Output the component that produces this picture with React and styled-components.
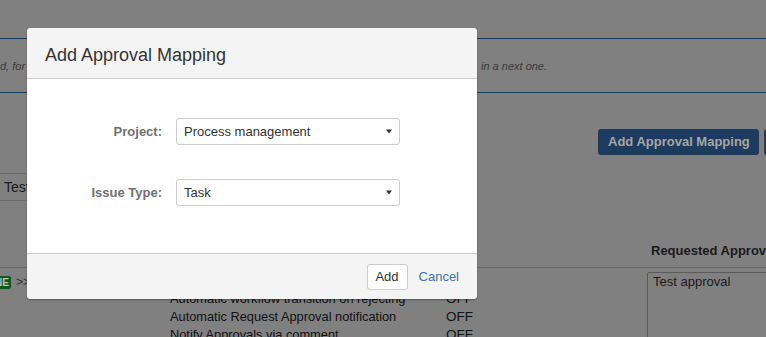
import styled, { createGlobalStyle } from "styled-components"

const GlobalStyle = createGlobalStyle`
  html, body { margin:0; padding:0; }
  body {
    font-family:"Liberation Sans", Arial, sans-serif;
    background:#808080;
    overflow:hidden;
  }
`

const Screen = styled.div`
  position:relative;
  width:766px;
  height:337px;
  overflow:hidden;
  background:#808080;
`

const Page = styled.div`
  padding-top:38px;
  color:#1a1a1a;
  font-size:13px;
`

const Rule = styled.div`
  height:1px;
  background:#1c3a5d;
`

const NoteBar = styled.div`
  display:grid;
  grid-template-columns:481px 1fr;
  align-items:center;
  height:53px;
  font-size:11px;
  font-style:italic;
  color:#3a3a3a;
`

const NoteCut = styled.span`
  white-space:nowrap;
  overflow:hidden;
`

const Toolbar = styled.div`
  display:flex;
  gap:5px;
  padding:36px 0 0 598px;
`

const PrimaryButton = styled.div`
  flex:none;
  height:26px;
  line-height:26px;
  padding:0 9px 0 10px;
  background:#1d3b5e;
  color:#a6a6a6;
  font-weight:bold;
  font-size:13px;
  border-radius:3px;
  white-space:nowrap;
`

const FilterRow = styled.div`
  margin-top:18px;
  display:flex;
`

const FilterBox = styled.div`
  width:220px;
  height:26px;
  line-height:26px;
  border-top:1px solid #6b6b6b;
  border-bottom:1px solid #6b6b6b;
  padding-left:4px;
  font-size:14px;
  color:#1a1a1a;
`

const Table = styled.div`
  margin-top:42px;
  display:grid;
  grid-template-columns:170px 477px 1fr;
`

const HeadCell = styled.div`
  height:24px;
  border-bottom:1px solid #6b6b6b;
  padding-left:4px;
  font-weight:bold;
  font-size:13px;
  color:#1a1a1a;
  white-space:nowrap;
`

const Cell = styled.div`
  padding-top:${p => p.$pad}px;
  display:flex;
  flex-direction:${p => (p.$stack ? "column" : "row")};
  align-items:${p => (p.$stack ? "stretch" : "flex-start")};
  gap:${p => (p.$stack ? "0" : "5px")};
`

const Lozenge = styled.span`
  display:inline-block;
  margin-left:-22px;
  height:13px;
  line-height:13px;
  padding:0 2px;
  background:#0e5a1c;
  color:#b9c7b2;
  font-size:10px;
  font-weight:bold;
  border-radius:2px;
`

const Arrows = styled.span`
  font-size:12px;
  color:#333;
  line-height:13px;
`

const OptionRow = styled.div`
  display:grid;
  grid-template-columns:276px auto;
  height:18px;
  line-height:18px;
  font-size:12.8px;
  color:#111;
  white-space:nowrap;
`

const Off = styled.span`
  font-size:13.5px;
`

const TextArea = styled.div`
  height:80px;
  border:1px solid #5a5a5a;
  border-radius:2px;
  padding:1px 5px;
  font-size:13px;
  color:#1a1a1a;
`

const ModalLayer = styled.div`
  position:absolute;
  left:27px;
  top:28px;
  width:450px;
  border-radius:4px;
  background:#fff;
  box-shadow:0 1px 2px rgba(0,0,0,0.35);
  overflow:hidden;
`

const ModalHeader = styled.div`
  height:50px;
  border-bottom:1px solid #cccccc;
  background:#f4f4f4;
  padding:0 18px;
  display:flex;
  align-items:center;
`

const ModalTitle = styled.h2`
  margin:5px 0 0;
  font-size:18px;
  font-weight:normal;
  color:#333;
`

const ModalBody = styled.div`
  height:174px;
  box-sizing:border-box;
  padding-top:39px;
`

const FieldRow = styled.div`
  display:grid;
  grid-template-columns:135px 224px;
  column-gap:14px;
  align-items:center;
  margin-bottom:34px;
`

const Label = styled.label`
  text-align:right;
  font-size:13px;
  font-weight:bold;
  color:#707070;
`

const SelectBox = styled.div`
  height:25px;
  border:1px solid #cccccc;
  border-radius:3px;
  padding:0 7px;
  display:flex;
  align-items:center;
  justify-content:space-between;
  font-size:13px;
  color:#333;
`

const ModalFooter = styled.div`
  height:45px;
  border-top:1px solid #cccccc;
  background:#f4f4f4;
  display:flex;
  justify-content:flex-end;
  align-items:center;
  gap:11px;
  padding-right:18px;
`

const FooterButton = styled.button`
  height:26px;
  width:41px;
  padding:0;
  background:#fff;
  border:1px solid #cccccc;
  border-radius:3px;
  font-family:inherit;
  font-size:13px;
  color:#333;
`

const LinkButton = styled.a`
  font-size:13px;
  color:#3b73af;
  text-decoration:none;
`

function Caret() {
  return (
    <svg width="6" height="5" viewBox="0 0 6 5">
      <path d="M0 0.5h6L3 4.5z" fill="#333" />
    </svg>
  )
}

export default function App() {
  return (
    <Screen>
      <GlobalStyle />
      <Page>
        <Rule />
        <NoteBar>
          <NoteCut>d, for each issue type, the approval is requested in the first step, the outcome is handled</NoteCut>
          <span>in a next one.</span>
        </NoteBar>
        <Rule />
        <Toolbar>
          <PrimaryButton>Add Approval Mapping</PrimaryButton>
          <PrimaryButton>Import</PrimaryButton>
        </Toolbar>
        <FilterRow>
          <FilterBox>Test</FilterBox>
        </FilterRow>
        <Table>
          <HeadCell />
          <HeadCell />
          <HeadCell>Requested Approvals</HeadCell>
          <Cell $pad={8}>
            <Lozenge>DONE</Lozenge>
            <Arrows>&gt;&gt;</Arrows>
          </Cell>
          <Cell $stack $pad={4}>
            <OptionRow>Automatic workflow transition on approving<Off>OFF</Off></OptionRow>
            <OptionRow>Automatic workflow transition on rejecting<Off>OFF</Off></OptionRow>
            <OptionRow>Automatic Request Approval notification<Off>OFF</Off></OptionRow>
            <OptionRow>Notify Approvals via comment<Off>OFF</Off></OptionRow>
          </Cell>
          <Cell $stack $pad={4}>
            <TextArea>Test approval</TextArea>
          </Cell>
        </Table>
      </Page>

      <ModalLayer>
        <ModalHeader>
          <ModalTitle>Add Approval Mapping</ModalTitle>
        </ModalHeader>
        <ModalBody>
          <FieldRow>
            <Label>Project:</Label>
            <SelectBox>Process management<Caret /></SelectBox>
          </FieldRow>
          <FieldRow>
            <Label>Issue Type:</Label>
            <SelectBox>Task<Caret /></SelectBox>
          </FieldRow>
        </ModalBody>
        <ModalFooter>
          <FooterButton>Add</FooterButton>
          <LinkButton href="#">Cancel</LinkButton>
        </ModalFooter>
      </ModalLayer>
    </Screen>
  )
}
